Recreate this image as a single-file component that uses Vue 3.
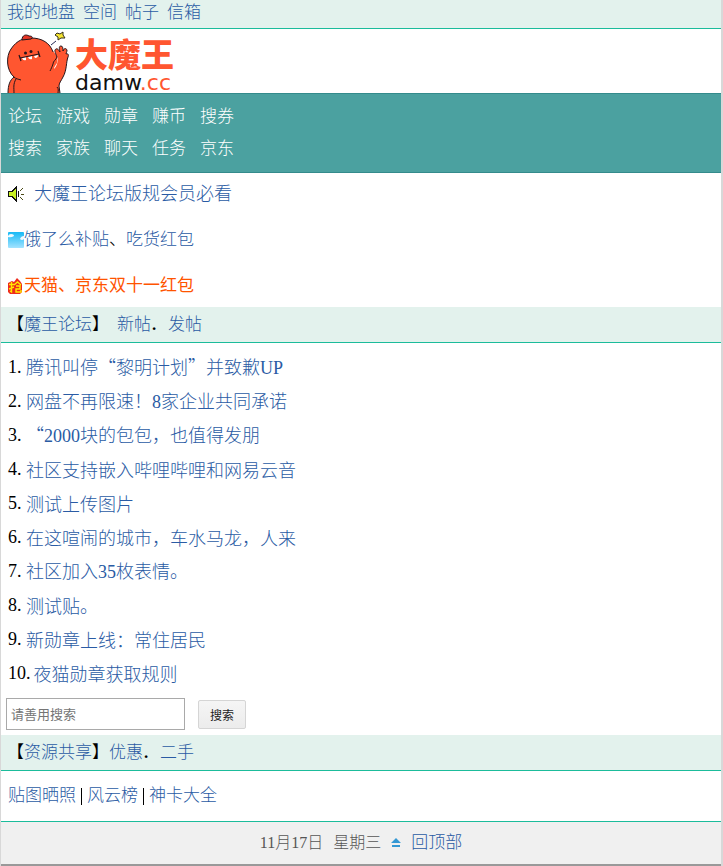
<script setup>
import { ref } from 'vue'

const keyword = ref('')

const userLinks = ['我的地盘', '空间', '帖子', '信箱']

const navRows = [
  ['论坛', '游戏', '勋章', '赚币', '搜券'],
  ['搜索', '家族', '聊天', '任务', '京东']
]

const topics = [
  '腾讯叫停“黎明计划”并致歉UP',
  '网盘不再限速！8家企业共同承诺',
  '“2000块的包包，也值得发朋',
  '社区支持嵌入哔哩哔哩和网易云音',
  '测试上传图片',
  '在这喧闹的城市，车水马龙，人来',
  '社区加入35枚表情。',
  '测试贴。',
  '新勋章上线：常住居民',
  '夜猫勋章获取规则'
]

const shareLinks = ['贴图晒照', '风云榜', '神卡大全']

// digits and letters are set in the serif face, quotes stay full width
const splitTitle = (title) => title.split(/([A-Za-z0-9]+)/).filter(Boolean)
const isLatin = (part) => /^[A-Za-z0-9]/.test(part)
</script>

<template>
  <div class="page" lang="zh-CN">
    <div class="user-bar">
      <a v-for="item in userLinks" :key="item" href="#">{{ item }}</a>
    </div>

    <header class="logo">
      <svg class="mascot" viewBox="0 0 62 62" width="62" height="62" aria-hidden="true">
        <path d="M1 62C1 54 3 49 7 46C-1 39-1 25 4 18C10 9 17 7 24 7C35 7 43 12 46 21C48 28 48 32 47 38C51 34 51 29 50 25C48 21 47 19 49 18C51 17 52 20 53 21C52 17 52 15 54 15C56 15 56 18 56 20C57 17 59 17 60 19C60 21 59 22 59 23C61 22 62 24 61 26C59 31 60 39 56 46C54 50 52 52 52 55L53 62Z" fill="#ff5630" />
        <path d="M46 20L50 25L50 32L46 38Z" fill="#ff5630" />
        <path d="M1 62C1 54 3 49 7 46C-1 39-1 25 4 18C10 9 17 7 24 7C35 7 43 12 46 21M50 26C48 21 47 19 49 18C51 17 52 20 53 21C52 17 52 15 54 15C56 15 56 18 56 20C57 17 59 17 60 19C60 21 59 22 59 23C61 22 62 24 61 26C59 31 60 39 56 46C54 50 52 52 52 55L53 62" fill="none" stroke="#24151b" stroke-width="1" />
        <path d="M15 9C15 4 19 3 22 5C26 5 26 7 24 8Z" fill="#e53525" stroke="#24151b" stroke-width="1" />
        <path d="M7 46C9 48 11 48 14 49M9 48C6 53 7 57 7 62M50 26C49 29 46 30 46 33C45 36 44 38 43 40M50 56C52 58 51 60 51 62" fill="none" stroke="#24151b" stroke-width="1" />
        <path d="M15 27L19 26L19 29Q16 30 15 27M21 26L25 25L25 28Q22 29 21 26M27 25L31 24Q31 27 28 27Z" fill="#fff" />
        <path d="M13 27L32 23M12 24L14 30M31 20L33 26" fill="none" stroke="#24151b" stroke-width="1.2" />
        <circle cx="18.500" cy="22" r="1.500" fill="#24151b" />
        <circle cx="24" cy="20.500" r="1.500" fill="#24151b" />
        <path d="M44 14L49 10" stroke="#252c58" stroke-width="1" />
        <path d="M50 2L53 3L56 1L56 4L58 7L54 7L51 9L51 6L48 4Z" fill="#f5e431" stroke="#35301c" stroke-width="1" />
      </svg>
      <div class="brand">
        <span class="brand-name">大魔王</span>
        <span class="brand-url">damw<span class="brand-tld">.cc</span></span>
      </div>
    </header>

    <nav class="nav">
      <div v-for="(row, i) in navRows" :key="i" class="nav-row">
        <a v-for="item in row" :key="item" href="#">{{ item }}</a>
      </div>
    </nav>

    <div class="notices">
      <p class="notice notice-main">
        <svg viewBox="0 0 16 16" width="16" height="16" shape-rendering="crispEdges" aria-hidden="true">
          <path d="M0 5H3L8 0H9V16H8L3 11H0Z" fill="#111" />
          <path d="M1 6H4L8 2V14L4 10H1Z" fill="#c8f022" />
          <path d="M10 5H11V11H10Z" fill="#111" />
          <path d="M12 4H13V3H14V2H15V3H14V4H13V5H12ZM13 8H16V9H13ZM12 11H13V12H14V13H15V14H14V13H13V12H12Z" fill="#4c4b18" />
        </svg>
        <a href="#">大魔王论坛版规会员必看</a>
      </p>
      <p class="notice">
        <svg viewBox="0 0 16 16" width="16" height="16" aria-hidden="true">
          <defs>
            <linearGradient id="sky" x1="0" y1="0" x2="0" y2="1">
              <stop offset="0" stop-color="#16b9f5" />
              <stop offset="1" stop-color="#a3e3ff" />
            </linearGradient>
          </defs>
          <rect width="16" height="16" rx="1" fill="url(#sky)" />
          <path d="M0 4Q1 2 3 2Q6 2 6 4Q3 6 0 5Z" fill="#effaff" />
          <path d="M16 4Q13 4 12 7Q14 9 16 7Z" fill="#effaff" />
        </svg>
        <a href="#">饿了么补贴</a>、<a href="#">吃货红包</a>
      </p>
      <p class="notice">
        <svg viewBox="0 0 16 16" width="16" height="16" aria-hidden="true">
          <path d="M0 5L4 3L6 4L9 0L12 3L14 6V14L12 16H2L0 14Z" fill="#ee2a1c" />
          <path d="M1 6.500H6M3.500 4V14L2 13M1 11L6 9M6 7L9.500 4L13 7M8 8H12V11H8V14H13V12" fill="none" stroke="#ffeb00" stroke-width="1.400" />
        </svg>
        <a class="hot" href="#">天猫、京东双十一红包</a>
      </p>
    </div>

    <h2 class="section-head">
      【<a href="#">魔王论坛</a>】
      <a class="after-title" href="#">新帖</a><span class="dot">.</span><a href="#">发帖</a>
    </h2>

    <ol class="topics">
      <li v-for="(topic, i) in topics" :key="topic">
        <span class="number">{{ i + 1 }}.</span>
        <a href="#"><span v-for="(part, n) in splitTitle(topic)" :key="n" :class="{ latin: isLatin(part) }">{{ part }}</span></a>
      </li>
    </ol>

    <form class="search" @submit.prevent="">
      <input v-model="keyword" type="text" placeholder="请善用搜索" aria-label="请善用搜索" />
      <button type="submit">搜索</button>
    </form>

    <h2 class="section-head">
      【<a href="#">资源共享</a>】<a href="#">优惠</a><span class="dot">.</span><a href="#">二手</a>
    </h2>

    <div class="share">
      <a v-for="item in shareLinks" :key="item" href="#">{{ item }}</a>
    </div>

    <footer class="footer">
      <span>11月17日</span>
      <span>星期三</span>
      <svg viewBox="0 0 10 10" width="10" height="10" aria-hidden="true">
        <path d="M5 0L10 5H0ZM1 7H9V9H1Z" fill="#3498d4" />
      </svg>
      <a href="#">回顶部</a>
    </footer>
  </div>
</template>

<style>
body {
  background: #d8d8d8;
}
</style>

<style scoped>
.page {
  margin: 0 2px 0 1px;
  background: #fff;
  color: #000;
  font-family: "Liberation Serif", "Noto Sans CJK SC", serif;
  font-size: 17px;
  font-weight: 300;
  line-height: 24px;
  text-spacing-trim: space-all;
  border-bottom: 2px solid #999;
}

a {
  color: #2a5ba4;
  text-decoration: none;
}

.user-bar {
  display: flex;
  gap: 8px;
  padding: 1px 6px 3px;
  background: #e3f2ed;
  border-bottom: 1px solid #1bbc9b;
}

.logo {
  display: flex;
  align-items: flex-end;
  gap: 6px;
  height: 64px;
  padding-left: 6px;
}

.mascot {
  display: block;
}

.brand {
  display: flex;
  flex-direction: column;
}

.brand-name {
  color: #ff5630;
  font-family: "Liberation Sans", "Noto Sans CJK SC", sans-serif;
  font-size: 33px;
  font-weight: 900;
  line-height: 34px;
}

.brand-url {
  color: #111;
  font-family: "DejaVu Sans", sans-serif;
  font-size: 22px;
  font-weight: 400;
  line-height: 20px;
}

.brand-tld {
  color: #ff5630;
}

.nav {
  padding: 7px;
  background: #4ba1a0;
  border-top: 1px solid #348b8c;
  border-bottom: 1px solid #348b8c;
}

.nav-row {
  display: flex;
  gap: 14px;
  line-height: 32px;
}

.nav a {
  color: #fff;
}

.notices {
  padding: 9px 7px;
}

.notice {
  display: flex;
  align-items: center;
  margin: 0;
}

.notice + .notice {
  margin-top: 22px;
}

.notice-main {
  gap: 10px;
  font-size: 18px;
}

.notice .hot {
  color: #ff5400;
  font-weight: 400;
}

.section-head {
  display: flex;
  align-items: center;
  margin: 0;
  padding: 6px 6px 5px;
  background: #e3f2ed;
  border-bottom: 1px solid #1bbc9b;
  font-size: 17px;
  font-weight: 300;
}

.after-title {
  margin-left: 8px;
}

.dot {
  width: 16px;
  padding-left: 1px;
  font-weight: 700;
}

.topics {
  margin: 0;
  padding: 7px 7px 8px;
  list-style: none;
  font-size: 18px;
  line-height: 34px;
}

.topics li {
  display: flex;
  align-items: center;
  height: 34px;
}

.topics a {
  font-family: "Noto Sans CJK SC", sans-serif;
}

.number {
  box-sizing: border-box;
  min-width: 18px;
  padding-right: 3px;
}

.topics .latin {
  font-family: "Liberation Serif", serif;
}

.search {
  display: flex;
  align-items: center;
  gap: 13px;
  padding: 0 5px 5px;
}

.search input {
  box-sizing: border-box;
  width: 179px;
  height: 32px;
  padding: 0 4px;
  border: 1px solid #a9a9a9;
  background: #fff;
  font-family: "Liberation Sans", "Noto Sans CJK SC", sans-serif;
  font-size: 13px;
}

.search input::placeholder {
  color: #757575;
}

.search button {
  height: 29px;
  padding: 0 11px;
  border: 1px solid #d5d5d5;
  border-radius: 2px;
  background: linear-gradient(#f5f5f5, #ececec);
  color: #222;
  font-family: "Liberation Sans", "Noto Sans CJK SC", sans-serif;
  font-size: 12px;
}

.share {
  display: flex;
  align-items: center;
  padding: 13px 7px;
}

.share a + a {
  display: flex;
  align-items: center;
}

.share a + a::before {
  content: "";
  width: 1px;
  height: 17px;
  margin: 0 5px;
  background: #000;
}

.footer {
  display: flex;
  justify-content: center;
  align-items: center;
  gap: 10px;
  padding: 9px 0;
  background: #f0f0f0;
  border-top: 1px solid #1bbc9b;
  color: #555;
}

.footer span {
  font-size: 16px;
}
</style>
